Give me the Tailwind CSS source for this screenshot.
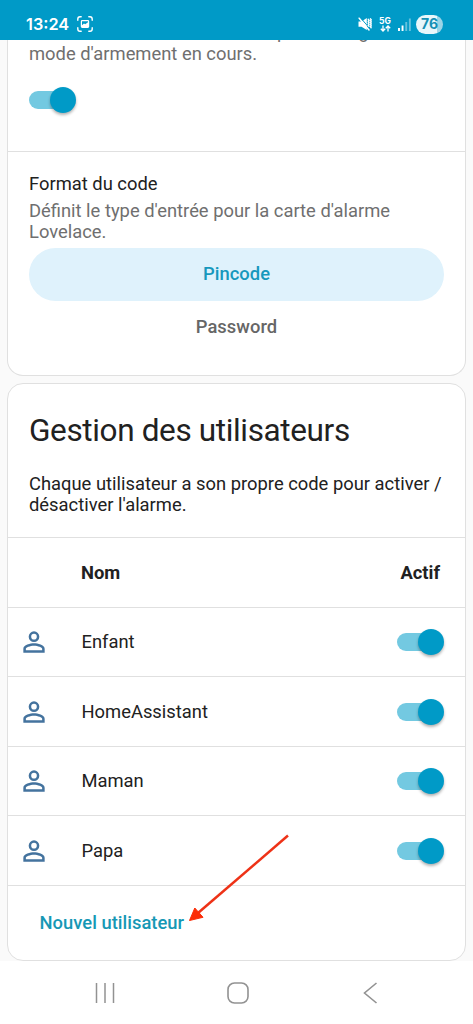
<!DOCTYPE html>
<html lang="fr">
<head>
<meta charset="utf-8">
<title>Gestion des utilisateurs</title>
<script src="https://cdn.jsdelivr.net/npm/@tailwindcss/browser@4"></script>
</head>
<body class="relative flex h-[1024px] w-[473px] flex-col overflow-hidden bg-white font-['Roboto',sans-serif] text-[18.37px] leading-[21.5px] text-[#212121]">
<svg class="hidden">
  <symbol id="person" viewBox="0 0 24 24"><path fill="#44739e" d="M12 4a4 4 0 0 1 4 4 4 4 0 0 1-4 4 4 4 0 0 1-4-4 4 4 0 0 1 4-4m0 1.9a2.1 2.1 0 1 0 0 4.2 2.1 2.1 0 0 0 0-4.2m0 7.1c2.67 0 8 1.33 8 4v3H4v-3c0-2.67 5.33-4 8-4m0 1.9c-2.97 0-6.1 1.46-6.1 2.1v1.1h12.2V17c0-.64-3.13-2.1-6.1-2.1"/></symbol>
</svg>

<header class="flex h-10 shrink-0 items-center bg-[#009ac7] pt-2 pr-[30px] pl-[26px] text-white">
  <span class="w-[44px] font-['Inter',sans-serif] text-[16.3px] leading-[18px] font-semibold whitespace-nowrap">13:24</span>
  <svg class="ml-[7px] h-4 w-4" viewBox="0 0 16 16" fill="none" stroke="white" stroke-width="1.4" stroke-linecap="round"><path d="M.8 4.2V3Q.8.8 3 .8h1.2M11.8.8H13q2.2 0 2.2 2.2v1.2M15.2 11.8V13q0 2.200-2.200 2.200h-1.200M4.200 15.200H3Q.8 15.200.8 13v-1.200"/><path fill="white" stroke="none" fill-rule="evenodd" d="M5.200 4h5.600q1.400 0 1.400 1.400v5.200q0 1.400-1.400 1.400H5.200q-1.400 0-1.400-1.400V5.400Q3.800 4 5.200 4M5 9.200l2-1.600 1.200.6L11 6.200V5.300H5z"/></svg>
  <div class="ml-auto flex items-center">
    <svg class="h-[14px] w-[14px]" viewBox="0 0 14 14" fill="none" stroke="white" stroke-linecap="round"><path fill="white" stroke="none" d="M.5 4.500h3L8.800 1v12L3.500 9.800h-3z"/><path stroke="#009ac7" stroke-width="1" d="M2.700 1l9.500 11"/><path stroke-width="1.500" d="M1.200 1.200 11 13"/><path stroke-width="1.400" d="M10.200 2.200l.8 1-.8 1 .8 1-.8 1 .8 1-.8 1 .8 1M12.500 1.800l.7 1-.7 1 .7 1-.7 1 .7 1-.7 1 .7 1-.7 1 .7 1"/></svg>
    <div class="ml-[7px] flex w-[12px] flex-col items-center">
      <span class="font-['Inter',sans-serif] text-[8.5px] leading-[8px] font-bold">5G</span>
      <svg class="h-[7px] w-[11px]" viewBox="0 0 11 7" fill="none" stroke="white" stroke-width="1.300"><path d="M3 .5v5.500M.8 3.800 3 6l2.200-2.200M8 6.500V1M5.800 3.200 8 1l2.200 2.200"/></svg>
    </div>
    <svg class="ml-[7px] h-[13px] w-[13px]" viewBox="0 0 13 13"><path fill="white" d="M0 10h2v3H0zM3.600 7.500h1.900V13H3.600z"/><path fill="white" fill-opacity=".4" d="M7.300 4h1.900v9H7.300zM10.900.5h1.900V13h-1.900z"/></svg>
    <span class="ml-[5px] flex h-[19px] w-[27px] items-center justify-center rounded-full bg-linear-to-r from-[#e8f7fb] from-76% to-[#9bd5e7] to-76% font-['Inter',sans-serif] text-[14px] font-bold text-[#1490b5]">76</span>
  </div>
</header>

<main class="flex h-[921px] shrink-0 flex-col gap-[7px] overflow-hidden bg-[#fafafa] px-[7px]">
  <section class="flex h-[336px] w-[459px] shrink-0 flex-col rounded-b-[16px] border border-t-0 border-[#e0e0e0] bg-white">
    <div class="flex h-[112px] flex-col border-b border-[#e0e0e0] px-[21px] text-[#6f6f6f]">
      <div class="-mt-[19px] flex"><span class="w-[248px] whitespace-nowrap">Un code doit être fourni</span><span>pour changer de</span></div>
      <p>mode d'armement en cours.</p>
      <div class="mt-[22px] flex h-[27px] w-[47px] items-center rounded-full"><span class="h-[18px] w-[34px] rounded-full bg-[#73c9e1]"></span><span class="-ml-[13px] size-[26px] shrink-0 rounded-full bg-[#009ac7] shadow-[0_2px_3px_rgba(0,0,0,0.3)]"></span></div>
    </div>
    <div class="flex flex-col px-[21px] pt-[21px]">
      <h2>Format du code</h2>
      <p class="mt-[5px] text-[#6f6f6f]">Définit le type d'entrée pour la carte d'alarme Lovelace.</p>
      <button class="mt-[5px] h-[53px] rounded-full bg-[#dff2fc] font-medium tracking-[0.05px] text-[#1698bd]">Pincode</button>
      <button class="h-[52px] font-medium tracking-[0.05px] text-[#666]">Password</button>
    </div>
  </section>

  <section class="flex h-[578px] w-[459px] shrink-0 flex-col rounded-[16px] border border-[#e0e0e0] bg-white">
    <div class="h-[154px] border-b border-[#e0e0e0] px-[21px] pt-[26px]">
      <h1 class="text-[31.5px] leading-[42px] tracking-[-0.36px]">Gestion des utilisateurs</h1>
      <p class="mt-[20.5px] whitespace-nowrap">Chaque utilisateur a son propre code pour activer /<br>désactiver l'alarme.</p>
    </div>
    <div class="flex h-[70px] items-center justify-between border-b border-[#e0e0e0] pr-[25px] pl-[73px] font-bold"><span>Nom</span><span>Actif</span></div>
    <div class="flex h-[69px] items-center border-b border-[#e0e0e0] pr-[21px] pl-[10px]"><svg class="size-[32px]"><use href="#person"/></svg><span class="ml-[31.5px] flex-1">Enfant</span><div class="flex h-[27px] w-[47px] items-center"><span class="h-[18px] w-[34px] rounded-full bg-[#73c9e1]"></span><span class="-ml-[13px] size-[26px] shrink-0 rounded-full bg-[#009ac7] shadow-[0_2px_3px_rgba(0,0,0,0.3)]"></span></div></div>
    <div class="flex h-[70px] items-center border-b border-[#e0e0e0] pr-[21px] pl-[10px]"><svg class="size-[32px]"><use href="#person"/></svg><span class="ml-[31.5px] flex-1">HomeAssistant</span><div class="flex h-[27px] w-[47px] items-center"><span class="h-[18px] w-[34px] rounded-full bg-[#73c9e1]"></span><span class="-ml-[13px] size-[26px] shrink-0 rounded-full bg-[#009ac7] shadow-[0_2px_3px_rgba(0,0,0,0.3)]"></span></div></div>
    <div class="flex h-[69px] items-center border-b border-[#e0e0e0] pr-[21px] pl-[10px]"><svg class="size-[32px]"><use href="#person"/></svg><span class="ml-[31.5px] flex-1">Maman</span><div class="flex h-[27px] w-[47px] items-center"><span class="h-[18px] w-[34px] rounded-full bg-[#73c9e1]"></span><span class="-ml-[13px] size-[26px] shrink-0 rounded-full bg-[#009ac7] shadow-[0_2px_3px_rgba(0,0,0,0.3)]"></span></div></div>
    <div class="flex h-[70px] items-center border-b border-[#e0e0e0] pr-[21px] pl-[10px]"><svg class="size-[32px]"><use href="#person"/></svg><span class="ml-[31.5px] flex-1">Papa</span><div class="flex h-[27px] w-[47px] items-center"><span class="h-[18px] w-[34px] rounded-full bg-[#73c9e1]"></span><span class="-ml-[13px] size-[26px] shrink-0 rounded-full bg-[#009ac7] shadow-[0_2px_3px_rgba(0,0,0,0.3)]"></span></div></div>
    <div class="flex flex-1 items-center pl-[31.5px] font-medium tracking-[0.03px] text-[#1698b5]"><button>Nouvel utilisateur</button></div>
  </section>
</main>

<nav class="flex flex-1 items-center bg-white pl-[94px] text-[#929292]">
  <svg class="h-6 w-[22px]" viewBox="0 0 22 24" fill="none" stroke="currentColor" stroke-width="1.500"><path d="M2.500 2v20M11 2v20M19.500 2v20"/></svg>
  <svg class="ml-[110px] h-6 w-6" viewBox="0 0 24 24" fill="none" stroke="currentColor" stroke-width="1.600"><rect x="2" y="2" width="20" height="20" rx="6.500"/></svg>
  <svg class="ml-[112px] h-6 w-4" viewBox="0 0 16 24" fill="none" stroke="currentColor" stroke-width="1.600"><path d="M14.500 2 2.500 12l12 10"/></svg>
</nav>

<svg class="pointer-events-none absolute top-[830px] left-[180px] h-[100px] w-[120px]" viewBox="0 0 120 100"><path d="M108 5.500 18 83" stroke="#ee3217" stroke-width="2.500" fill="none"/><path d="M9.500 90.500 14.800 78 23 87.300z" fill="#fb2b05" stroke="#fb2b05"/></svg>
</body>
</html>
